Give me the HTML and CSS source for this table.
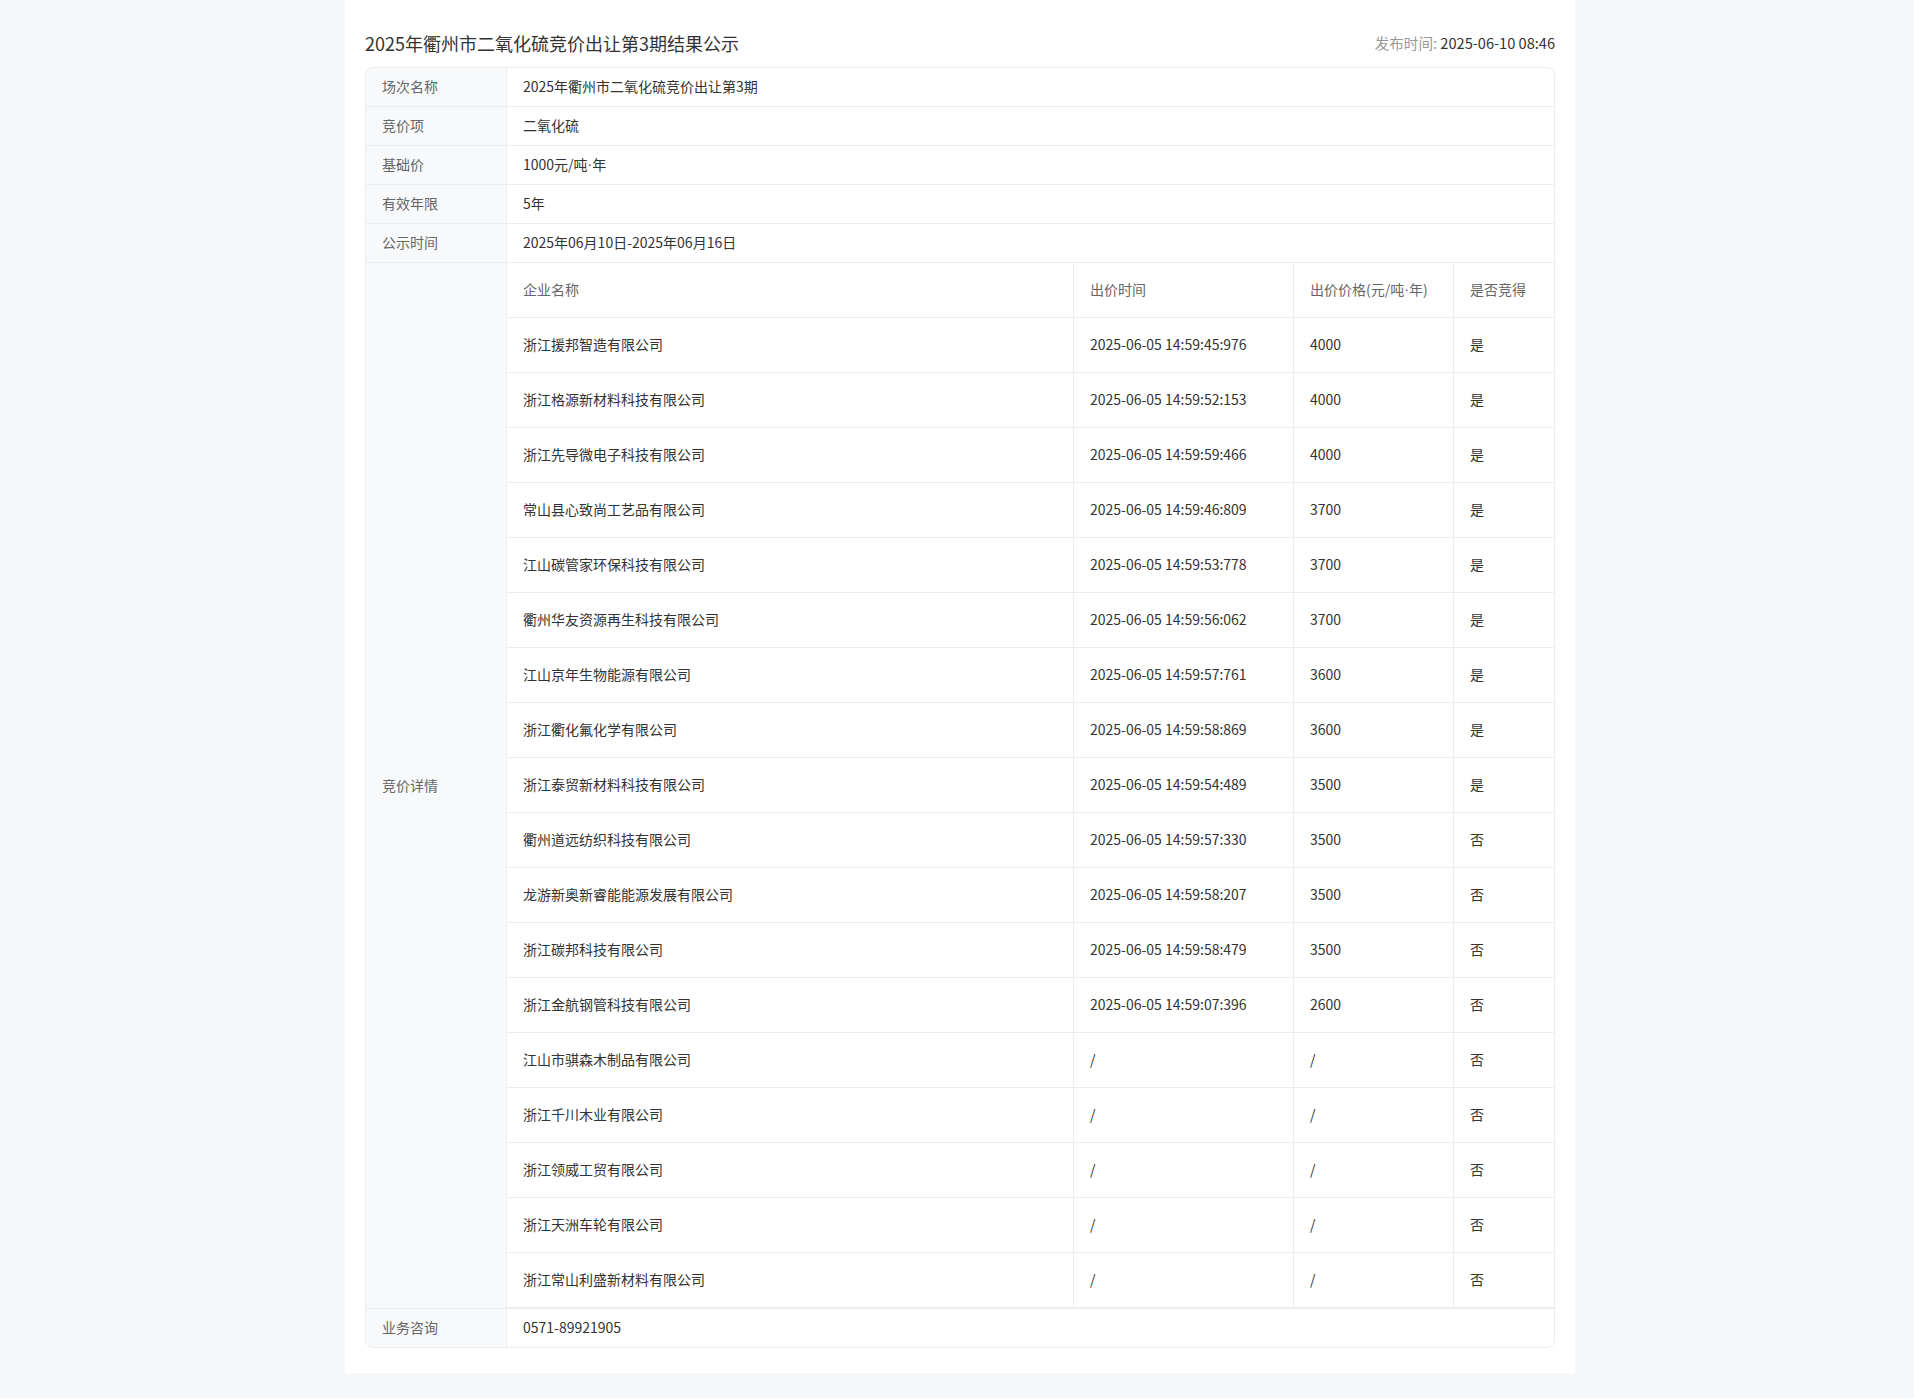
FILE: index.html
```html
<!DOCTYPE html>
<html lang="zh-CN">
<head>
<meta charset="utf-8">
<title>2025年衢州市二氧化硫竞价出让第3期结果公示</title>
<link rel="stylesheet" href="styles.css">
</head>
<body>
<div class="page">
  <div class="card">
    <div class="head">
      <h1 class="title">2025年衢州市二氧化硫竞价出让第3期结果公示</h1>
      <div class="pub"><span class="pub-label">发布时间:</span> 2025-06-10 08:46</div>
    </div>
    <div class="info">
      <div class="row"><div class="label">场次名称</div><div class="value">2025年衢州市二氧化硫竞价出让第3期</div></div>
      <div class="row"><div class="label">竞价项</div><div class="value">二氧化硫</div></div>
      <div class="row"><div class="label">基础价</div><div class="value">1000元/吨<span class="dot">·</span>年</div></div>
      <div class="row"><div class="label">有效年限</div><div class="value">5年</div></div>
      <div class="row"><div class="label">公示时间</div><div class="value">2025年06月10日-2025年06月16日</div></div>
      <div class="row row-detail">
        <div class="label">竞价详情</div>
        <div class="bids">
          <div class="th">企业名称</div><div class="th">出价时间</div><div class="th">出价价格(元/吨<span class="dot">·</span>年)</div><div class="th">是否竞得</div>
          <div class="td">浙江援邦智造有限公司</div><div class="td">2025-06-05 14:59:45:976</div><div class="td">4000</div><div class="td">是</div>
          <div class="td">浙江格源新材料科技有限公司</div><div class="td">2025-06-05 14:59:52:153</div><div class="td">4000</div><div class="td">是</div>
          <div class="td">浙江先导微电子科技有限公司</div><div class="td">2025-06-05 14:59:59:466</div><div class="td">4000</div><div class="td">是</div>
          <div class="td">常山县心致尚工艺品有限公司</div><div class="td">2025-06-05 14:59:46:809</div><div class="td">3700</div><div class="td">是</div>
          <div class="td">江山碳管家环保科技有限公司</div><div class="td">2025-06-05 14:59:53:778</div><div class="td">3700</div><div class="td">是</div>
          <div class="td">衢州华友资源再生科技有限公司</div><div class="td">2025-06-05 14:59:56:062</div><div class="td">3700</div><div class="td">是</div>
          <div class="td">江山京年生物能源有限公司</div><div class="td">2025-06-05 14:59:57:761</div><div class="td">3600</div><div class="td">是</div>
          <div class="td">浙江衢化氟化学有限公司</div><div class="td">2025-06-05 14:59:58:869</div><div class="td">3600</div><div class="td">是</div>
          <div class="td">浙江泰贸新材料科技有限公司</div><div class="td">2025-06-05 14:59:54:489</div><div class="td">3500</div><div class="td">是</div>
          <div class="td">衢州道远纺织科技有限公司</div><div class="td">2025-06-05 14:59:57:330</div><div class="td">3500</div><div class="td">否</div>
          <div class="td">龙游新奥新睿能能源发展有限公司</div><div class="td">2025-06-05 14:59:58:207</div><div class="td">3500</div><div class="td">否</div>
          <div class="td">浙江碳邦科技有限公司</div><div class="td">2025-06-05 14:59:58:479</div><div class="td">3500</div><div class="td">否</div>
          <div class="td">浙江金航钢管科技有限公司</div><div class="td">2025-06-05 14:59:07:396</div><div class="td">2600</div><div class="td">否</div>
          <div class="td">江山市骐森木制品有限公司</div><div class="td">/</div><div class="td">/</div><div class="td">否</div>
          <div class="td">浙江千川木业有限公司</div><div class="td">/</div><div class="td">/</div><div class="td">否</div>
          <div class="td">浙江领威工贸有限公司</div><div class="td">/</div><div class="td">/</div><div class="td">否</div>
          <div class="td">浙江天洲车轮有限公司</div><div class="td">/</div><div class="td">/</div><div class="td">否</div>
          <div class="td">浙江常山利盛新材料有限公司</div><div class="td">/</div><div class="td">/</div><div class="td">否</div>
        </div>
      </div>
      <div class="row row-last"><div class="label">业务咨询</div><div class="value">0571-89921905</div></div>
    </div>
  </div>
</div>
</body>
</html>
```

FILE: styles.css
```css
* { box-sizing: border-box; }
html, body {
  margin: 0;
  padding: 0;
  background: #f6f7fb;
  font-family: "Noto Sans CJK SC", "Noto Sans", sans-serif;
  color: #333;
}
.page {
  padding-left: 345px;
  height: 1398px;
  overflow: hidden;
}
.card {
  width: 1230px;
  background: #fff;
  padding: 20px 20px 25px 20px;
}
.head {
  height: 47px;
  padding-bottom: 2px;
  display: flex;
  align-items: center;
  justify-content: space-between;
}
.title {
  margin: 0;
  font-size: 18px;
  font-weight: 400;
  color: #333;
  line-height: 24px;
}
.pub {
  font-size: 14.6px;
  color: #333;
  line-height: 20px;
}
.pub-label { color: #999; }
.dot {
  font-family: "Liberation Sans", sans-serif;
}
.info {
  border: 1px solid #ebedf0;
  border-radius: 8px;
  overflow: hidden;
  font-size: 14px;
}
.row {
  display: grid;
  grid-template-columns: 141px 1047px;
  border-bottom: 1px solid #ebedf0;
}
.row-last { border-bottom: none; }
.label {
  background: #f8f9fb;
  color: #666;
  border-right: 1px solid #ebedf0;
  padding: 0 16px 2px 16px;
  height: 38px;
  display: flex;
  align-items: center;
}
.row-detail .label { height: auto; }
.value {
  padding: 0 16px 2px 16px;
  height: 38px;
  display: flex;
  align-items: center;
  color: #333;
}
.bids {
  display: grid;
  grid-template-columns: 567px 220px 160px 100px;
}
.th, .td {
  height: 55px;
  padding: 0 16px 2px 16px;
  display: flex;
  align-items: center;
  border-bottom: 1px solid #ebedf0;
  border-right: 1px solid #ebedf0;
}
.th:nth-child(4n), .td:nth-child(4n) { border-right: none; }
.th { color: #666; }
.td { color: #333; }
```
